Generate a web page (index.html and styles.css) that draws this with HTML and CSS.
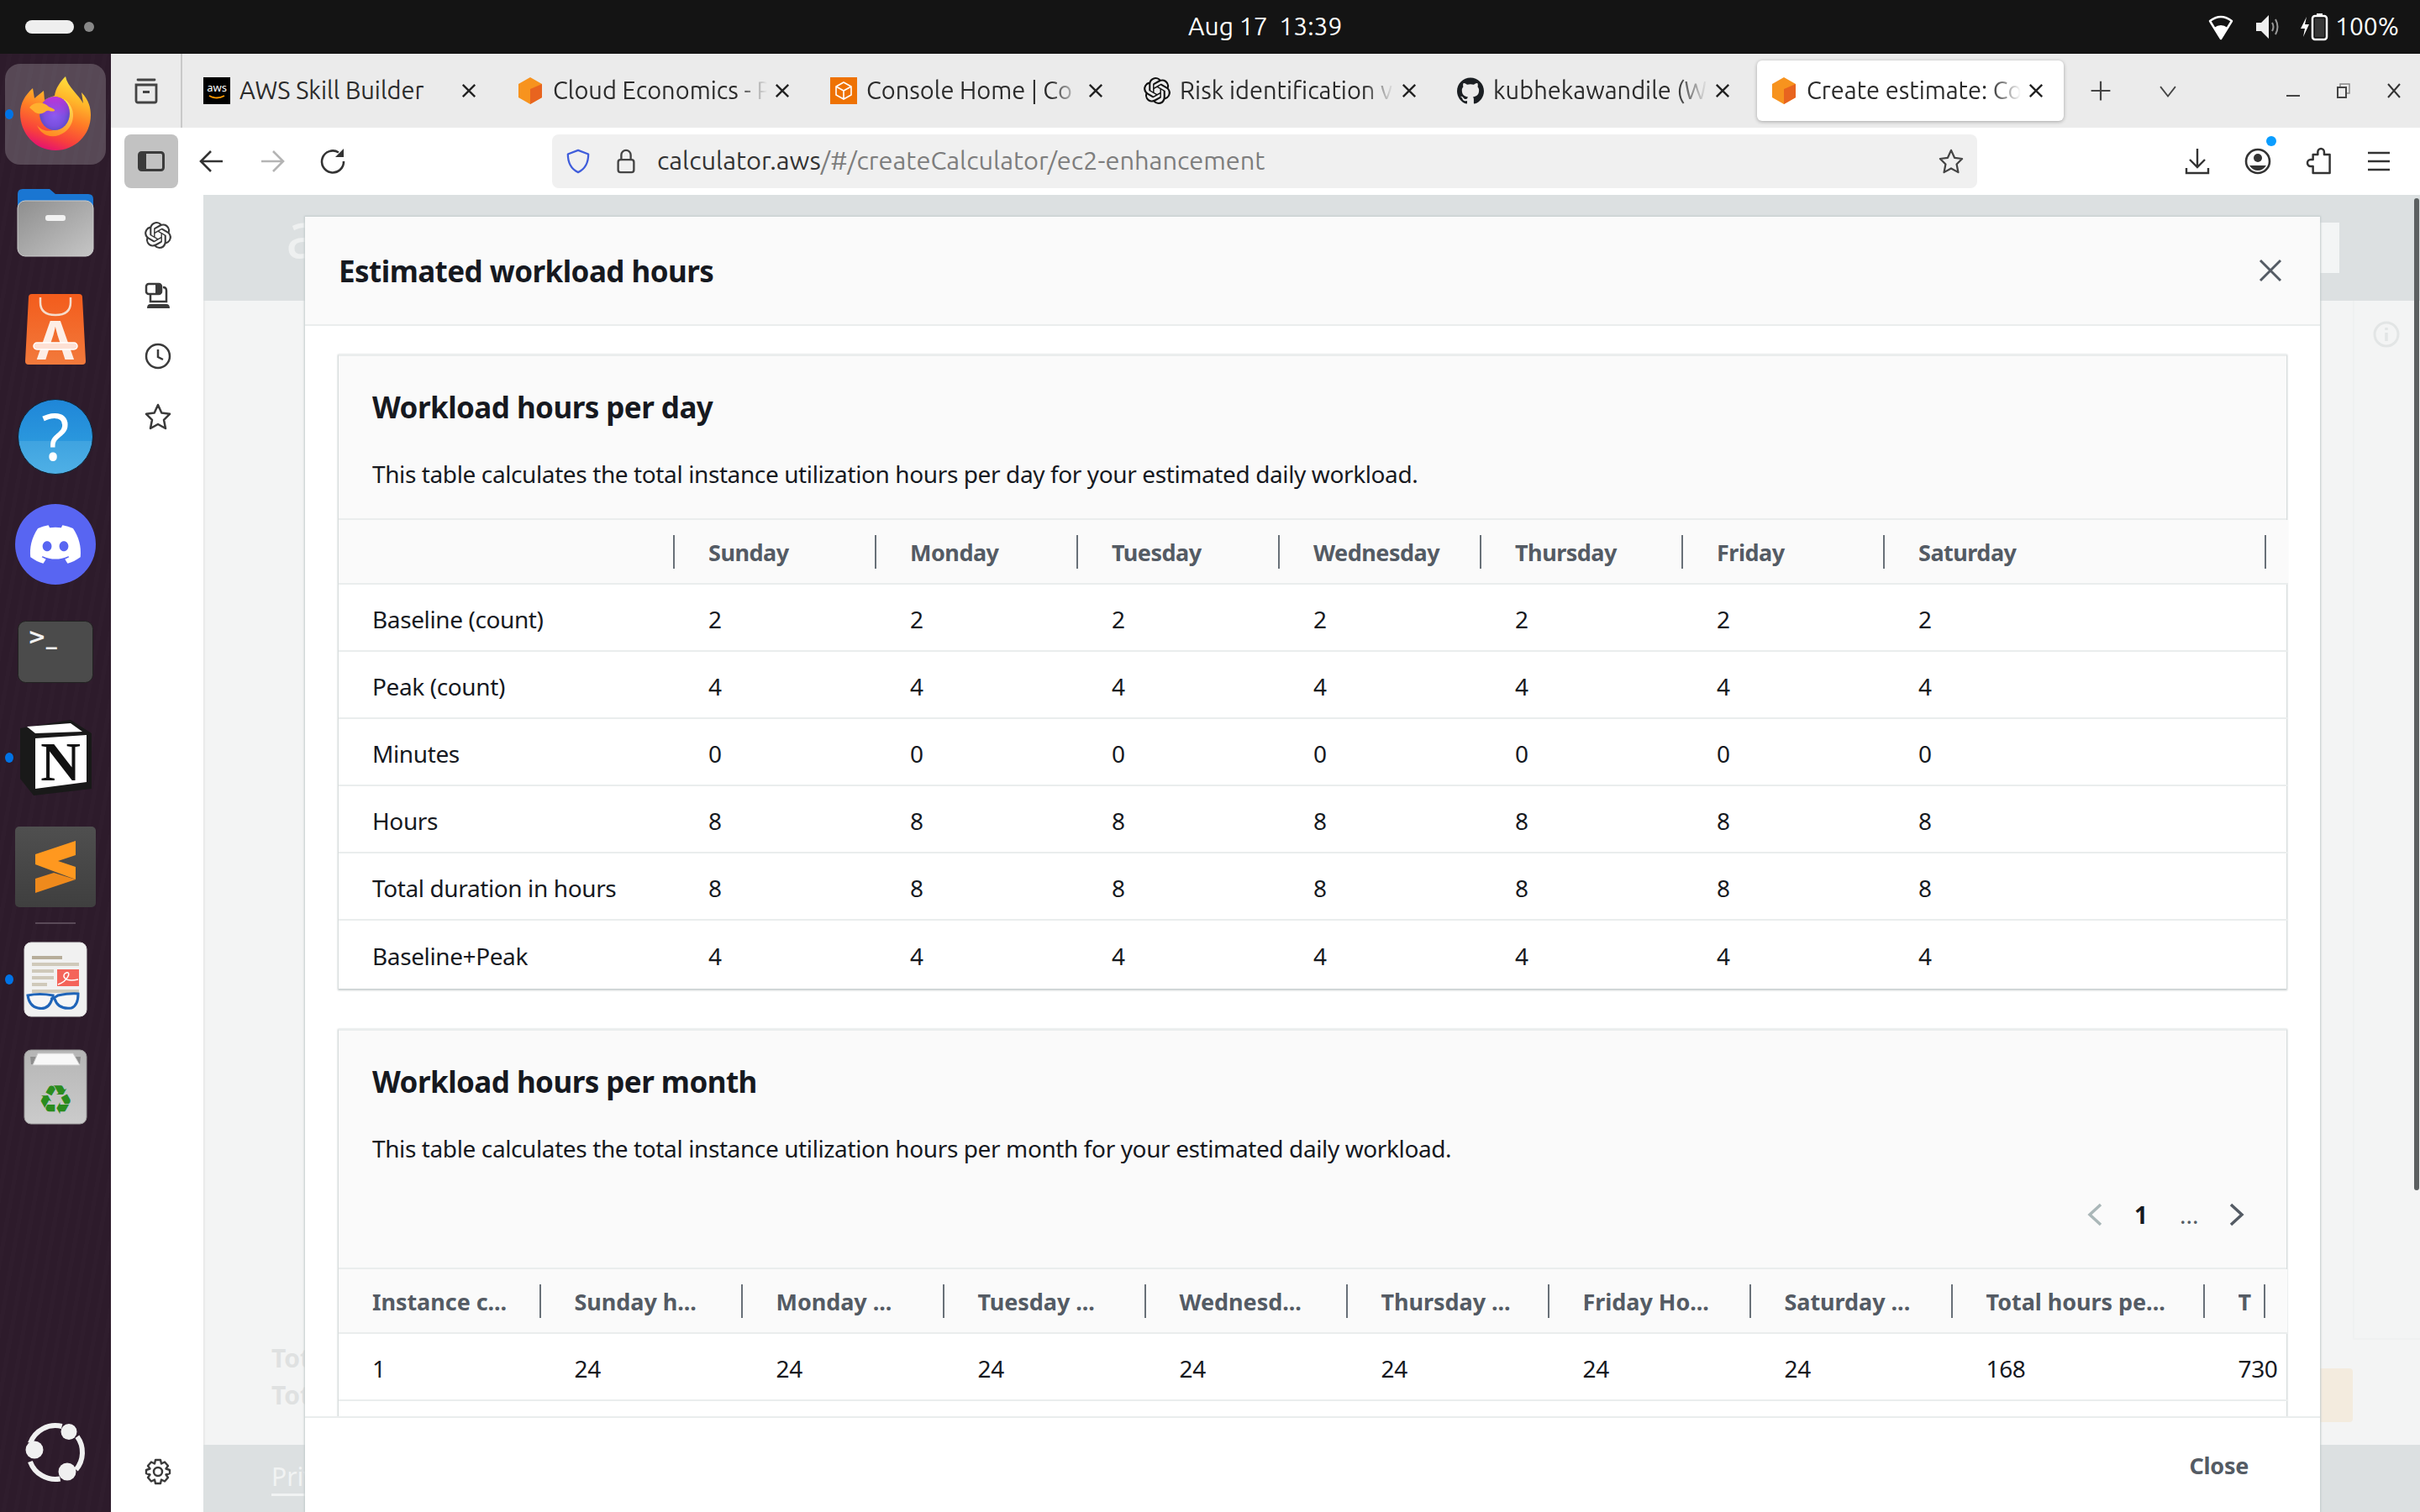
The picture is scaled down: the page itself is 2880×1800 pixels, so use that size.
FILE: index.html
```html
<!DOCTYPE html>
<html lang="en">
<head>
<meta charset="utf-8">
<title>Create estimate</title>
<link rel="stylesheet" href="styles.css">
</head>
<body>
<div class="desktop">
  <header class="topbar">
    <div class="workspaces"><span class="ws-pill"></span><span class="ws-dot"></span></div>
    <div class="clock">Aug 17&nbsp; 13:39</div>
    <div class="status">
      <svg class="st-wifi" viewBox="0 0 32 32"><path d="M16 30 3 9Q16-1 29 9Z" fill="none" stroke="#fff" stroke-width="2.5" stroke-linejoin="round"/><path d="M16 30 8 17Q16 11 24 17Z" fill="#fff"/></svg>
      <svg class="st-vol" viewBox="0 0 32 32"><path d="M2 11h6l9-9v28l-9-9H2Z" fill="#eee"/><path d="M21 11q3 5 0 10M25 7q5 9 0 18" fill="none" stroke="#999" stroke-width="2"/></svg>
      <svg class="st-bat" viewBox="0 0 34 32"><path d="M8 4 1 18h5l-2 10 7-15H6Z" fill="#fff"/><rect x="15" y="3" width="17" height="28" rx="3" fill="none" stroke="#fff" stroke-width="2.5"/><rect x="20" y="0" width="7" height="3" fill="#fff"/><rect x="18" y="6" width="11" height="22" fill="#fff" opacity=".15"/></svg>
      <span class="st-text">100%</span>
    </div>
  </header>

  <nav class="dock">
    <div class="dock-item dock-firefox">
      <span class="run-dot"></span>
      <svg class="ic-firefox" viewBox="0 0 84 88">
        <defs>
          <linearGradient id="ffa" x1=".75" y1="0" x2=".4" y2="1"><stop offset="0" stop-color="#ffe640"/><stop offset=".3" stop-color="#ffb52a"/><stop offset=".55" stop-color="#ff7a26"/><stop offset=".82" stop-color="#f8403c"/><stop offset="1" stop-color="#e5136f"/></linearGradient>
          <radialGradient id="ffb" cx=".5" cy=".55" r=".6"><stop offset="0" stop-color="#8a5cf0"/><stop offset=".55" stop-color="#7a4fe0"/><stop offset="1" stop-color="#4a48b0"/></radialGradient>
          <linearGradient id="ffp" x1=".5" y1="0" x2=".5" y2=".6"><stop offset="0" stop-color="#c235dc"/><stop offset="1" stop-color="#c235dc" stop-opacity="0"/></linearGradient>
          <linearGradient id="ffc" x1=".7" y1="0" x2=".4" y2="1"><stop offset="0" stop-color="#ffe45a"/><stop offset="1" stop-color="#ff8a22"/></linearGradient>
        </defs>
        <path d="M54 0C56 12 70 22 75 32L73 19C82 28 84 38 84 46 84 70 65 88 42 88 18 88 0 68 0 44 0 32 6 22 15 14L17 26 28 17 29 28C34 25 38 24 41 23 42 14 48 6 54 0Z" fill="url(#ffa)"/>
        <path d="M50 26C68 34 68 62 46 70 34 74 24 68 20 58 28 68 42 66 50 58 60 48 58 36 50 26Z" fill="url(#ffc)"/>
        <ellipse cx="41" cy="44" rx="18" ry="20" fill="url(#ffb)"/>
        <ellipse cx="41" cy="44" rx="18" ry="20" fill="url(#ffp)"/>
        <path d="M11 37C16 30 28 30 34 36 38 38 42 39 41 41 36 43 34 39 30 42 26 45 22 45 18 43Z" fill="#ffb02e"/>
      </svg>
    </div>
    <svg class="ic-folder" viewBox="0 0 90 82">
      <defs><linearGradient id="fo" x1="0" y1="0" x2="1" y2="1"><stop offset="0" stop-color="#8e8e8e"/><stop offset="1" stop-color="#c6c6c6"/></linearGradient></defs>
      <path d="M0 8q0-6 6-6h32l7 6h39q6 0 6 6v30H0Z" fill="#1a76d2"/>
      <rect x="0" y="16" width="90" height="66" rx="9" fill="url(#fo)" stroke="#ccc" stroke-width="1"/>
      <rect x="33" y="33" width="24" height="7" rx="3" fill="#f2f2f2"/>
    </svg>
    <svg class="ic-store" viewBox="0 0 72 84">
      <defs><linearGradient id="st" x1="0" y1="0" x2="0" y2="1"><stop offset="0" stop-color="#f35c1c"/><stop offset="1" stop-color="#f27a3c"/></linearGradient></defs>
      <path d="M4 4q0-4 4-4h56q4 0 4 4l4 76q0 4-4 4H4q-4 0-4-4Z" fill="url(#st)"/>
      <path d="M18 4v6q0 15 18 15t18-15V4" fill="none" stroke="#f5dccb" stroke-width="2.5"/>
      <text class="store-a" x="36" y="78" text-anchor="middle">A</text>
      <rect x="10" y="58" width="52" height="8" rx="4" fill="#fde0d4" stroke="#fff" stroke-width="1.5"/>
    </svg>
    <svg class="ic-help" viewBox="0 0 90 90">
      <defs><linearGradient id="he" x1="0" y1="0" x2="0" y2="1"><stop offset="0" stop-color="#1f86d8"/><stop offset=".55" stop-color="#2a97dd"/><stop offset=".56" stop-color="#3fa3e0"/><stop offset="1" stop-color="#4fb0e6"/></linearGradient></defs>
      <circle cx="45" cy="45" r="44.5" fill="url(#he)" stroke="#123" stroke-width="1"/>
      <text class="help-q" x="45" y="73" text-anchor="middle">?</text>
    </svg>
    <svg class="ic-discord" viewBox="0 0 96 96">
      <circle cx="48" cy="48" r="48" fill="#5865f2"/>
      <g transform="translate(18 18) scale(2.5)"><path fill="#fff" d="M20.317 4.3698a19.7913 19.7913 0 00-4.8851-1.5152.0741.0741 0 00-.0785.0371c-.211.3753-.4447.8648-.6083 1.2495-1.8447-.2762-3.68-.2762-5.4868 0-.1636-.3933-.4058-.8742-.6177-1.2495a.077.077 0 00-.0785-.037 19.7363 19.7363 0 00-4.8852 1.515.0699.0699 0 00-.0321.0277C.5334 9.0458-.319 13.5799.0992 18.0578a.0824.0824 0 00.0312.0561c2.0528 1.5076 4.0413 2.4228 5.9929 3.0294a.0777.0777 0 00.0842-.0276c.4616-.6304.8731-1.2952 1.226-1.9942a.076.076 0 00-.0416-.1057c-.6528-.2476-1.2743-.5495-1.8722-.8923a.077.077 0 01-.0076-.1277c.1258-.0943.2517-.1923.3718-.2914a.0743.0743 0 01.0776-.0105c3.9278 1.7933 8.18 1.7933 12.0614 0a.0739.0739 0 01.0785.0095c.1202.099.246.1981.3728.2924a.077.077 0 01-.0066.1276 12.2986 12.2986 0 01-1.873.8914.0766.0766 0 00-.0407.1067c.3604.698.7719 1.3628 1.225 1.9932a.076.076 0 00.0842.0286c1.961-.6067 3.9495-1.5219 6.0023-3.0294a.077.077 0 00.0313-.0552c.5004-5.177-.8382-9.6739-3.5485-13.6604a.061.061 0 00-.0312-.0286zM8.02 15.3312c-1.1825 0-2.1569-1.0857-2.1569-2.419 0-1.3332.9555-2.4189 2.157-2.4189 1.2108 0 2.1757 1.0952 2.1568 2.419 0 1.3332-.9555 2.4189-2.1569 2.4189zm7.9748 0c-1.1825 0-2.1569-1.0857-2.1569-2.419 0-1.3332.9554-2.4189 2.1569-2.4189 1.2108 0 2.1757 1.0952 2.1568 2.419 0 1.3332-.946 2.4189-2.1568 2.4189Z"/></g>
    </svg>
    <svg class="ic-term" viewBox="0 0 90 74">
      <rect x="0.5" y="0.5" width="89" height="73" rx="9" fill="#4b4b4b" stroke="#222"/>
      <text class="term-t" x="12" y="28">&gt;_</text>
    </svg>
    <div class="dock-item dock-notion">
      <span class="run-dot"></span>
      <svg class="ic-notion" viewBox="0 0 85 90">
        <path d="M0 10 60 0 85 16V82L16 90 0 70Z" fill="#191919"/>
        <path d="M8 8 60 4 74 14 18 16Z" fill="#fff"/>
        <path d="M18 22 79 18V74L18 82Z" fill="#fff"/>
        <text class="notion-n" x="48" y="72" text-anchor="middle">N</text>
      </svg>
    </div>
    <svg class="ic-sublime" viewBox="0 0 96 96">
      <defs><linearGradient id="su" x1="0" y1="0" x2="0" y2="1"><stop offset="0" stop-color="#4f4f4f"/><stop offset="1" stop-color="#3f3f3f"/></linearGradient></defs>
      <rect width="96" height="96" rx="5" fill="url(#su)"/>
      <path d="M24 33 72 17V34L51 41 72 48V63L24 45Z" fill="#ff981f"/>
      <path d="M24 62 46 55 72 63 24 79Z" fill="#ef8a1c"/>
    </svg>
    <span class="dock-sep"></span>
    <div class="dock-item dock-reader">
      <span class="run-dot"></span>
      <svg class="ic-reader" viewBox="0 0 74 88">
        <rect width="74" height="88" rx="8" fill="#f1f1f1" stroke="#ddd"/>
        <rect x="9" y="16" width="36" height="4" fill="#b6ad9a"/>
        <rect x="9" y="24" width="56" height="4" fill="#cfc9ba"/>
        <rect x="9" y="32" width="26" height="4" fill="#cfc9ba"/>
        <rect x="9" y="40" width="26" height="4" fill="#cfc9ba"/>
        <rect x="9" y="48" width="18" height="4" fill="#cfc9ba"/>
        <rect x="9" y="56" width="56" height="4" fill="#cfc9ba"/>
        <rect x="39" y="32" width="26" height="20" fill="#f4645a"/>
        <path d="M40 50C52 46 56 34 50 36 44 38 46 48 64 44" fill="none" stroke="#fff" stroke-width="1.5"/>
        <path d="M4 63q14-3 30 0-1 5 6 0 15-3 24-2 0 14-8 17-16 2-20-11-5-1-3 0-4 14-17 11Q6 76 4 63Z" fill="#fff" fill-opacity=".35" stroke="#1f64b8" stroke-width="3"/>
      </svg>
    </div>
    <svg class="ic-trash" viewBox="0 0 74 88">
      <defs><linearGradient id="tr" x1="0" y1="0" x2="0" y2="1"><stop offset="0" stop-color="#b5b5b5"/><stop offset="1" stop-color="#cbcbcb"/></linearGradient></defs>
      <rect width="74" height="88" rx="8" fill="url(#tr)" stroke="#9a9a9a"/>
      <path d="M7 8H67L66 17H8Z" fill="#8d8d8d"/>
      <path d="M10 18 16 4H58L66 18Z" fill="#f8f8f8" stroke="#ccc"/>
      <text class="trash-r" x="37" y="76" text-anchor="middle">♻</text>
    </svg>
    <svg class="ic-ubuntu" viewBox="0 0 72 68">
      <path d="M61.900 15.200A32 32 0 0 1 60.500 54.600M41.600 65.500A32 32 0 0 1 5.900 44.900M5.900 23.100A32 32 0 0 1 43.700 3" fill="none" stroke="#f0f0f0" stroke-width="6"/>
      <circle cx="52" cy="9.500" r="9.500" fill="#f0f0f0"/>
      <circle cx="11" cy="31" r="10.500" fill="#f0f0f0"/>
      <circle cx="50" cy="57" r="10.500" fill="#f0f0f0"/>
    </svg>
  </nav>

  <div class="browser">
    <div class="tabbar">
      <div class="view-btn">
        <svg class="icon" viewBox="0 0 32 32"><path d="M6 3h20M4 9h24v19a2 2 0 0 1-2 2H6a2 2 0 0 1-2-2Z" fill="none" stroke="#444" stroke-width="2.800" stroke-linecap="round"/><rect x="12" y="16" width="8" height="3" fill="#444"/></svg>
      </div>
      <div class="tab">
        <svg class="fav" viewBox="0 0 32 32"><rect width="32" height="32" fill="#000"/><text class="aws-t" x="16" y="17" text-anchor="middle">aws</text><path d="M7 22q9 5 18 0" fill="none" stroke="#f90" stroke-width="2"/></svg>
        <span class="tab-label plain">AWS Skill Builder</span>
        <span class="tab-x"><svg viewBox="0 0 20 20"><path d="M4 4 16 16M16 4 4 16" stroke="#222" stroke-width="2"/></svg></span>
      </div>
      <div class="tab">
        <svg class="fav" viewBox="0 0 32 32"><path d="M16 0 30 8V24L16 32 2 24V8Z" fill="#f7931e"/><path d="M16 14 30 8V24L16 32Z" fill="#e8641f"/></svg>
        <span class="tab-label">Cloud Economics - P</span>
        <span class="tab-x"><svg viewBox="0 0 20 20"><path d="M4 4 16 16M16 4 4 16" stroke="#222" stroke-width="2"/></svg></span>
      </div>
      <div class="tab">
        <svg class="fav" viewBox="0 0 32 32"><rect width="32" height="32" fill="#ee7203"/><path d="M16 6 25 11V21L16 26 7 21V11ZM7 11 16 16 25 11M16 16V26" fill="none" stroke="#fff" stroke-width="1.600"/></svg>
        <span class="tab-label">Console Home | Co</span>
        <span class="tab-x"><svg viewBox="0 0 20 20"><path d="M4 4 16 16M16 4 4 16" stroke="#222" stroke-width="2"/></svg></span>
      </div>
      <div class="tab">
        <svg class="fav" viewBox="0 0 24 24"><path fill="#111" d="M22.2819 9.8211a5.9847 5.9847 0 0 0-.5157-4.9108 6.0462 6.0462 0 0 0-6.5098-2.9A6.0651 6.0651 0 0 0 4.9807 4.1818a5.9847 5.9847 0 0 0-3.9977 2.9 6.0462 6.0462 0 0 0 .7427 7.0966 5.98 5.98 0 0 0 .511 4.9107 6.051 6.051 0 0 0 6.5146 2.9001A5.9847 5.9847 0 0 0 13.2599 24a6.0557 6.0557 0 0 0 5.7718-4.2058 5.9894 5.9894 0 0 0 3.9977-2.9001 6.0557 6.0557 0 0 0-.7475-7.0729zm-9.022 12.6081a4.4755 4.4755 0 0 1-2.8764-1.0408l.1419-.0804 4.7783-2.7582a.7948.7948 0 0 0 .3927-.6813v-6.7369l2.02 1.1686a.071.071 0 0 1 .038.052v5.5826a4.504 4.504 0 0 1-4.4945 4.4944zm-9.6607-4.1254a4.4708 4.4708 0 0 1-.5346-3.0137l.142.0852 4.783 2.7582a.7712.7712 0 0 0 .7806 0l5.8428-3.3685v2.3324a.0804.0804 0 0 1-.0332.0615L9.74 19.9502a4.4992 4.4992 0 0 1-6.1408-1.6464zM2.3408 7.8956a4.485 4.485 0 0 1 2.3655-1.9728V11.6a.7664.7664 0 0 0 .3879.6765l5.8144 3.3543-2.0201 1.1685a.0757.0757 0 0 1-.071 0l-4.8303-2.7865A4.504 4.504 0 0 1 2.3408 7.872zm16.5963 3.8558L13.1038 8.364 15.1192 7.2a.0757.0757 0 0 1 .071 0l4.8303 2.7913a4.4944 4.4944 0 0 1-.6765 8.1042v-5.6772a.79.79 0 0 0-.407-.667zm2.0107-3.0231l-.142-.0852-4.7735-2.7818a.7759.7759 0 0 0-.7854 0L9.409 9.2297V6.8974a.0662.0662 0 0 1 .0284-.0615l4.8303-2.7866a4.4992 4.4992 0 0 1 6.6802 4.66zM8.3065 12.863l-2.02-1.1638a.0804.0804 0 0 1-.038-.0567V6.0742a4.4992 4.4992 0 0 1 7.3757-3.4537l-.142.0805L8.704 5.459a.7948.7948 0 0 0-.3927.6813zm1.0976-2.3654l2.602-1.4998 2.6069 1.4998v2.9994l-2.5974 1.5093-2.6067-1.4997Z"/></svg>
        <span class="tab-label">Risk identification v</span>
        <span class="tab-x"><svg viewBox="0 0 20 20"><path d="M4 4 16 16M16 4 4 16" stroke="#222" stroke-width="2"/></svg></span>
      </div>
      <div class="tab">
        <svg class="fav" viewBox="0 0 24 24"><path fill="#1b1f23" d="M12 .297c-6.63 0-12 5.373-12 12 0 5.303 3.438 9.8 8.205 11.385.6.113.82-.258.82-.577 0-.285-.01-1.04-.015-2.04-3.338.724-4.042-1.61-4.042-1.61C4.422 18.07 3.633 17.7 3.633 17.7c-1.087-.744.084-.729.084-.729 1.205.084 1.838 1.236 1.838 1.236 1.07 1.835 2.809 1.305 3.495.998.108-.776.417-1.305.76-1.605-2.665-.3-5.466-1.332-5.466-5.93 0-1.31.465-2.38 1.235-3.22-.135-.303-.54-1.523.105-3.176 0 0 1.005-.322 3.3 1.23.96-.267 1.98-.399 3-.405 1.02.006 2.04.138 3 .405 2.28-1.552 3.27-1.23 3.27-1.23.645 1.653.24 2.873.12 3.176.765.84 1.23 1.91 1.23 3.22 0 4.61-2.805 5.625-5.475 5.92.42.36.81 1.096.81 2.22 0 1.606-.015 2.896-.015 3.286 0 .315.21.69.825.57C20.565 22.092 24 17.592 24 12.297c0-6.627-5.373-12-12-12"/></svg>
        <span class="tab-label">kubhekawandile (W</span>
        <span class="tab-x"><svg viewBox="0 0 20 20"><path d="M4 4 16 16M16 4 4 16" stroke="#222" stroke-width="2"/></svg></span>
      </div>
      <div class="tab tab-active">
        <svg class="fav" viewBox="0 0 32 32"><path d="M16 0 30 8V24L16 32 2 24V8Z" fill="#f7931e"/><path d="M16 14 30 8V24L16 32Z" fill="#e8641f"/></svg>
        <span class="tab-label">Create estimate: Co</span>
        <span class="tab-x"><svg viewBox="0 0 20 20"><path d="M4 4 16 16M16 4 4 16" stroke="#222" stroke-width="2"/></svg></span>
      </div>
      <button class="tb-btn tb-new"><svg viewBox="0 0 32 32"><path d="M16 3V29M3 16H29" stroke="#444" stroke-width="2.500"/></svg></button>
      <button class="tb-btn tb-list"><svg viewBox="0 0 32 32"><path d="M5 10 16 24 27 10" fill="none" stroke="#444" stroke-width="2.200"/></svg></button>
      <div class="win-ctl">
        <svg viewBox="0 0 20 20"><path d="M2 16H18" stroke="#444" stroke-width="2"/></svg>
        <svg viewBox="0 0 20 20"><path d="M6 5V2H17V13H14" fill="none" stroke="#888" stroke-width="1.500"/><rect x="3" y="6" width="10" height="12" fill="none" stroke="#444" stroke-width="2"/></svg>
        <svg viewBox="0 0 20 20"><path d="M3 2 17 18M17 2 3 18" stroke="#333" stroke-width="2"/></svg>
      </div>
    </div>

    <div class="toolbar">
      <button class="side-toggle"><svg viewBox="0 0 32 24"><rect x="1.500" y="1.500" width="29" height="21" rx="3" fill="none" stroke="#3b3b3b" stroke-width="3"/><rect x="2" y="2" width="8" height="20" fill="#3b3b3b"/></svg></button>
      <div class="nav-btns">
        <button class="nav-btn"><svg viewBox="0 0 32 32"><path d="M29 16H4M15 4 3 16 15 28" fill="none" stroke="#333" stroke-width="2.600"/></svg></button>
        <button class="nav-btn"><svg viewBox="0 0 32 32"><path d="M3 16H28M17 4 29 16 17 28" fill="none" stroke="#b4b4b4" stroke-width="2.600"/></svg></button>
        <button class="nav-btn"><svg viewBox="0 0 32 32"><path d="M23 5.500A13 13 0 1 0 29 16" fill="none" stroke="#333" stroke-width="2.600"/><path d="M19 11H29V1Z" fill="#333"/></svg></button>
      </div>
      <div class="urlbar">
        <svg class="url-shield" viewBox="0 0 32 32"><path d="M16 2 29 7Q29 24 16 30 3 24 3 7Z" fill="none" stroke="#3f5ddb" stroke-width="2.400" stroke-linejoin="round"/></svg>
        <svg class="url-lock" viewBox="0 0 32 32"><rect x="6" y="14" width="20" height="16" rx="3" fill="none" stroke="#444" stroke-width="2.500"/><path d="M10 14V8a6 6 0 0 1 12 0V14" fill="none" stroke="#444" stroke-width="2.500"/></svg>
        <span class="url-text">calculator.aws<span class="url-path">/#/createCalculator/ec2-enhancement</span></span>
        <svg class="url-star" viewBox="0 0 32 32"><path d="M16 2 20.300 11.500 30 12.800 23 19.800 25 30 16 25 7 30 9 19.800 2 12.800 11.700 11.500Z" fill="none" stroke="#444" stroke-width="2.400" stroke-linejoin="round"/></svg>
      </div>
      <div class="tool-btns">
        <button class="nav-btn"><svg viewBox="0 0 32 32"><path d="M16 1V23M7 14 16 23 25 14" fill="none" stroke="#333" stroke-width="2.400"/><path d="M3 24V30H29V24" fill="none" stroke="#333" stroke-width="2.400"/></svg></button>
        <button class="nav-btn account"><svg viewBox="0 0 32 32"><circle cx="16" cy="16" r="14" fill="none" stroke="#333" stroke-width="2.600"/><circle cx="16" cy="12" r="5" fill="#333"/><path d="M6 21H26Q22 27 16 27 10 27 6 21Z" fill="#333"/></svg><span class="acct-dot"></span></button>
        <button class="nav-btn"><svg viewBox="0 0 32 32"><path d="M13 8V5a4 4 0 0 1 8 0V8H28V30H7V22H4a4 4 0 0 1 0-8H7V8Z" transform="translate(3 0) scale(.95 1)" fill="none" stroke="#333" stroke-width="2.600" stroke-linejoin="round"/></svg></button>
        <button class="nav-btn"><svg viewBox="0 0 32 32"><path d="M3 6H29M3 16H29M3 26H29" stroke="#333" stroke-width="2.600"/></svg></button>
      </div>
    </div>

    <div class="workspace">
      <aside class="sidebar">
        <svg class="icon" viewBox="0 0 24 24"><path fill="#3a3a3a" d="M22.2819 9.8211a5.9847 5.9847 0 0 0-.5157-4.9108 6.0462 6.0462 0 0 0-6.5098-2.9A6.0651 6.0651 0 0 0 4.9807 4.1818a5.9847 5.9847 0 0 0-3.9977 2.9 6.0462 6.0462 0 0 0 .7427 7.0966 5.98 5.98 0 0 0 .511 4.9107 6.051 6.051 0 0 0 6.5146 2.9001A5.9847 5.9847 0 0 0 13.2599 24a6.0557 6.0557 0 0 0 5.7718-4.2058 5.9894 5.9894 0 0 0 3.9977-2.9001 6.0557 6.0557 0 0 0-.7475-7.0729zm-9.022 12.6081a4.4755 4.4755 0 0 1-2.8764-1.0408l.1419-.0804 4.7783-2.7582a.7948.7948 0 0 0 .3927-.6813v-6.7369l2.02 1.1686a.071.071 0 0 1 .038.052v5.5826a4.504 4.504 0 0 1-4.4945 4.4944zm-9.6607-4.1254a4.4708 4.4708 0 0 1-.5346-3.0137l.142.0852 4.783 2.7582a.7712.7712 0 0 0 .7806 0l5.8428-3.3685v2.3324a.0804.0804 0 0 1-.0332.0615L9.74 19.9502a4.4992 4.4992 0 0 1-6.1408-1.6464zM2.3408 7.8956a4.485 4.485 0 0 1 2.3655-1.9728V11.6a.7664.7664 0 0 0 .3879.6765l5.8144 3.3543-2.0201 1.1685a.0757.0757 0 0 1-.071 0l-4.8303-2.7865A4.504 4.504 0 0 1 2.3408 7.872zm16.5963 3.8558L13.1038 8.364 15.1192 7.2a.0757.0757 0 0 1 .071 0l4.8303 2.7913a4.4944 4.4944 0 0 1-.6765 8.1042v-5.6772a.79.79 0 0 0-.407-.667zm2.0107-3.0231l-.142-.0852-4.7735-2.7818a.7759.7759 0 0 0-.7854 0L9.409 9.2297V6.8974a.0662.0662 0 0 1 .0284-.0615l4.8303-2.7866a4.4992 4.4992 0 0 1 6.6802 4.66zM8.3065 12.863l-2.02-1.1638a.0804.0804 0 0 1-.038-.0567V6.0742a4.4992 4.4992 0 0 1 7.3757-3.4537l-.142.0805L8.704 5.459a.7948.7948 0 0 0-.3927.6813zm1.0976-2.3654l2.602-1.4998 2.6069 1.4998v2.9994l-2.5974 1.5093-2.6067-1.4997Z"/></svg>
        <svg class="icon" viewBox="0 0 32 32"><rect x="2" y="2" width="18" height="12" rx="3" fill="none" stroke="#3a3a3a" stroke-width="2.500"/><rect x="13" y="3" width="6" height="10" fill="#3a3a3a"/><path d="M7 15V23H26V10Q26 6 22 6" fill="none" stroke="#3a3a3a" stroke-width="2.500"/><path d="M3 31q0-5 4-5H26q4 0 4 5Z" fill="#3a3a3a"/></svg>
        <svg class="icon" viewBox="0 0 32 32"><circle cx="16" cy="16" r="14" fill="none" stroke="#3a3a3a" stroke-width="2.500"/><path d="M16 8V17L22 20" fill="none" stroke="#3a3a3a" stroke-width="2.500"/></svg>
        <svg class="icon" viewBox="0 0 32 32"><path d="M16 2 20.300 11.500 30 12.800 23 19.800 25 30 16 25 7 30 9 19.800 2 12.800 11.700 11.500Z" fill="none" stroke="#3a3a3a" stroke-width="2.500" stroke-linejoin="round"/></svg>
        <svg class="icon gear" viewBox="0 0 32 32"><circle cx="16" cy="16" r="5" fill="none" stroke="#3a3a3a" stroke-width="2.500"/><path d="M13 2H19L20 6.500 24 4.500 28 9 25.500 12.500 30 14V18L25.500 19.500 28 23 24 27.500 20 25.500 19 30H13L12 25.500 8 27.500 4 23 6.500 19.500 2 18V14L6.500 12.500 4 9 8 4.500 12 6.500Z" fill="none" stroke="#3a3a3a" stroke-width="2.400" stroke-linejoin="round"/></svg>
      </aside>

      <main class="page">
        <div class="page-head"><span class="page-logo">a</span><span class="page-search"></span></div>
        <div class="page-body">
          <svg class="page-info" viewBox="0 0 32 32"><circle cx="16" cy="16" r="14" fill="none" stroke="#e2e5e5" stroke-width="3"/><path d="M16 14V24M16 8V11" stroke="#e2e5e5" stroke-width="3.500"/></svg>
          <span class="page-panel"></span>
          <span class="page-alert"></span>
          <div class="page-total">Total</div>
          <div class="page-total">Total</div>
        </div>
        <div class="page-foot"><a class="page-link">Privacy</a></div>

        <section class="modal">
          <div class="modal-head">
            <h2 class="modal-title">Estimated workload hours</h2>
            <svg class="modal-x" viewBox="0 0 28 28"><path d="M2 2 26 26M26 2 2 26" stroke="#545b64" stroke-width="3"/></svg>
          </div>
          <div class="modal-body">
            <article class="card">
              <div class="card-head">
                <h3 class="card-title">Workload hours per day</h3>
                <p class="card-desc">This table calculates the total instance utilization hours per day for your estimated daily workload.</p>
              </div>
              <table class="grid">
                <colgroup><col class="c-lead"><col class="c-d"><col class="c-d"><col class="c-d"><col class="c-d"><col class="c-d"><col class="c-d"><col class="c-rest"><col class="c-trail"></colgroup>
                <thead><tr><th></th><th>Sunday</th><th>Monday</th><th>Tuesday</th><th>Wednesday</th><th>Thursday</th><th>Friday</th><th>Saturday</th><th class="no-sep"></th></tr></thead>
                <tbody>
                  <tr><td>Baseline (count)</td><td>2</td><td>2</td><td>2</td><td>2</td><td>2</td><td>2</td><td>2</td><td></td></tr>
                  <tr><td>Peak (count)</td><td>4</td><td>4</td><td>4</td><td>4</td><td>4</td><td>4</td><td>4</td><td></td></tr>
                  <tr><td>Minutes</td><td>0</td><td>0</td><td>0</td><td>0</td><td>0</td><td>0</td><td>0</td><td></td></tr>
                  <tr><td>Hours</td><td>8</td><td>8</td><td>8</td><td>8</td><td>8</td><td>8</td><td>8</td><td></td></tr>
                  <tr><td>Total duration in hours</td><td>8</td><td>8</td><td>8</td><td>8</td><td>8</td><td>8</td><td>8</td><td></td></tr>
                  <tr class="last"><td>Baseline+Peak</td><td>4</td><td>4</td><td>4</td><td>4</td><td>4</td><td>4</td><td>4</td><td></td></tr>
                </tbody>
              </table>
            </article>
            <article class="card card-month">
              <div class="card-head card-head-month">
                <h3 class="card-title">Workload hours per month</h3>
                <p class="card-desc">This table calculates the total instance utilization hours per month for your estimated daily workload.</p>
                <div class="pager">
                  <svg class="pg-arrow" viewBox="0 0 18 28"><path d="M16 2 3 14 16 26" fill="none" stroke="#aab7b8" stroke-width="3.500"/></svg>
                  <span class="pg-num">1</span>
                  <span class="pg-more">...</span>
                  <svg class="pg-arrow" viewBox="0 0 18 28"><path d="M2 2 15 14 2 26" fill="none" stroke="#545b64" stroke-width="3.500"/></svg>
                </div>
              </div>
              <table class="grid grid-month">
                <colgroup><col class="m-lead"><col class="m-d"><col class="m-d"><col class="m-d"><col class="m-d"><col class="m-d"><col class="m-d"><col class="m-d"><col class="m-total"><col class="m-last"><col class="c-trail"></colgroup>
                <thead><tr><th>Instance c...</th><th>Sunday h...</th><th>Monday ...</th><th>Tuesday ...</th><th>Wednesd...</th><th>Thursday ...</th><th>Friday Ho...</th><th>Saturday ...</th><th>Total hours pe...</th><th class="clip"><span>T</span></th><th class="no-sep"></th></tr></thead>
                <tbody>
                  <tr><td>1</td><td>24</td><td>24</td><td>24</td><td>24</td><td>24</td><td>24</td><td>24</td><td>168</td><td>730</td><td></td></tr>
                  <tr><td></td><td></td><td></td><td></td><td></td><td></td><td></td><td></td><td></td><td></td><td></td></tr>
                </tbody>
              </table>
            </article>
          </div>
          <div class="modal-foot"><button class="close-btn">Close</button></div>
        </section>
        <span class="page-scroll"></span>
      </main>
    </div>
  </div>
</div>
</body>
</html>
```
FILE: styles.css
```css
* { box-sizing: border-box; }
html, body { margin: 0; padding: 0; }
body { width: 2880px; height: 1800px; overflow: hidden; font-family: "Noto Sans", sans-serif; background: #fff; }
button { border: 0; padding: 0; background: none; font: inherit; }
svg { display: block; flex: none; overflow: visible; }

.desktop { display: grid; grid-template-columns: 132px 1fr; grid-template-rows: 64px 1fr; width: 2880px; height: 1800px; }

/* top bar */
.topbar { grid-column: 1 / -1; background: #141414; color: #fff; display: grid; grid-template-columns: 1414px 1fr auto; align-items: center; font-family: "Ubuntu", "Noto Sans", sans-serif; padding-right: 25px; }
.workspaces { display: flex; align-items: center; gap: 12px; padding-left: 30px; }
.ws-pill { width: 58px; height: 16px; border-radius: 8px; background: #eeeeee; }
.ws-dot { width: 12px; height: 12px; border-radius: 50%; background: #888; }
.clock { font-size: 30px; padding-bottom: 3px; }
.status { display: flex; align-items: center; }
.st-wifi { width: 32px; height: 32px; }
.st-vol { width: 32px; height: 32px; margin-left: 24px; }
.st-bat { width: 34px; height: 32px; margin-left: 22px; }
.st-text { margin-left: 8px; font-size: 30px; padding-bottom: 3px; }

/* dock */
.dock { background: repeating-linear-gradient(100deg, #2d1b2b 0 9px, #2f1d2d 9px 14px); display: flex; flex-direction: column; align-items: center; position: relative; }
.dock-item { position: relative; display: flex; justify-content: center; align-items: center; }
.run-dot { position: absolute; left: 6px; top: 50%; width: 10px; height: 12px; margin-top: -6px; border-radius: 50%; background: #0073e6; }
.dock-firefox { width: 120px; height: 120px; margin-top: 12px; border-radius: 18px; background: rgba(255,255,255,.2); }
.dock-firefox .run-dot { left: 0; }
.ic-firefox { width: 84px; height: 88px; margin-top: -3px; }
.ic-folder { width: 90px; height: 82px; margin-top: 27px; }
.ic-store { width: 72px; height: 84px; margin-top: 45px; }
.ic-help { width: 90px; height: 90px; margin-top: 41px; }
.ic-discord { width: 96px; height: 96px; margin-top: 35px; }
.ic-term { width: 90px; height: 74px; margin-top: 43px; }
.dock-notion { width: 132px; margin-top: 44px; }
.dock-notion .run-dot { left: 6px; }
.ic-notion { width: 85px; height: 90px; }
.ic-sublime { width: 96px; height: 96px; margin-top: 37px; }
.dock-sep { width: 48px; height: 2px; background: #5a4a58; margin-top: 18px; }
.dock-reader { width: 132px; margin-top: 22px; }
.ic-reader { width: 74px; height: 88px; }
.ic-trash { width: 74px; height: 88px; margin-top: 40px; }
.ic-ubuntu { width: 72px; height: 68px; margin-top: auto; margin-bottom: 37px; }
.store-a { font: 700 64px "Noto Sans", sans-serif; fill: #fdeee6; }
.help-q { font: 400 76px "Noto Sans", sans-serif; fill: #fff; }
.term-t { font: 700 26px "DejaVu Sans", sans-serif; fill: #f2f2f2; }
.notion-n { font: 700 66px "Liberation Serif", serif; fill: #111; }
.trash-r { font: 400 48px "DejaVu Sans", sans-serif; fill: #2a8c1e; }
.aws-t { font: 400 13px "Noto Sans", sans-serif; fill: #fff; }

/* browser chrome */
.browser { display: flex; flex-direction: column; min-width: 0; }
.tabbar { height: 88px; background: #ebebeb; display: flex; align-items: center; font-family: "Ubuntu", "Noto Sans", sans-serif; }
.icon { width: 32px; height: 32px; }
.view-btn { width: 85px; height: 88px; border-right: 2px solid #c9c9c9; display: flex; align-items: center; justify-content: center; margin-right: 9px; }
.tab { width: 365px; height: 72px; margin-right: 8px; padding: 0 21px 0 16px; display: flex; align-items: center; border-radius: 6px; color: #2b2b2b; font-size: 29px; flex: none; }
.tab-active { background: #fff; box-shadow: 0 1px 4px rgba(0,0,0,.3); }
.fav { width: 32px; height: 32px; }
.tab-label { flex: 1; min-width: 0; margin-left: 11px; padding-bottom: 3px; white-space: nowrap; overflow: hidden; -webkit-mask-image: linear-gradient(90deg, #000 calc(100% - 36px), transparent); mask-image: linear-gradient(90deg, #000 calc(100% - 36px), transparent); }
.tab-label.plain { -webkit-mask-image: none; mask-image: none; }
.tab-x { width: 24px; height: 24px; margin-left: 6px; display: flex; align-items: center; justify-content: center; }
.tab-x svg { width: 24px; height: 24px; }
.tb-btn { width: 36px; height: 36px; flex: none; }
.tb-new { margin-left: 22px; width: 28px; }
.tb-new svg { width: 28px; height: 28px; }
.tb-list { margin-left: 53px; width: 26px; }
.tb-list svg { width: 26px; height: 26px; }
.win-ctl { display: flex; gap: 40px; margin-left: 126px; }
.win-ctl svg { width: 20px; height: 20px; }

.toolbar { height: 80px; background: #fff; display: flex; align-items: center; padding-left: 16px; }
.side-toggle { width: 64px; height: 64px; border-radius: 8px; background: #c2c2c2; display: flex; align-items: center; justify-content: center; }
.side-toggle svg { width: 32px; height: 24px; }
.nav-btns { display: flex; margin-left: 4px; }
.tool-btns { display: flex; margin-left: 226px; }
.nav-btn { width: 72px; height: 64px; display: flex; align-items: center; justify-content: center; position: relative; }
.nav-btn svg { width: 32px; height: 32px; }
.account .acct-dot { position: absolute; left: 46px; top: 2px; width: 12px; height: 12px; border-radius: 50%; background: #0a9dff; }
.urlbar { width: 1696px; height: 64px; margin-left: 225px; background: #f0f0f0; border-radius: 8px; display: flex; align-items: center; padding: 0 16px 0 16px; font-family: "Ubuntu", "Noto Sans", sans-serif; font-size: 30.8px; color: #333; }
.urlbar svg { width: 30px; height: 32px; }
.url-lock { margin-left: 27px; }
.url-text { margin-left: 22px; padding-bottom: 3px; flex: 1; white-space: nowrap; }
.url-path { color: #7d7d7d; }

/* sidebar + page */
.workspace { flex: 1; display: flex; min-height: 0; }
.sidebar { width: 110px; background: #fff; display: flex; flex-direction: column; align-items: center; gap: 40px; padding: 32px 0 32px 2px; }
.gear { margin-top: auto; }
.page { flex: 1; position: relative; display: flex; flex-direction: column; overflow: hidden; background: #f3f4f4; box-shadow: inset 3px 0 3px -2px rgba(0,0,0,.08); }
.page-head { height: 126px; background: #dce0e1; flex: none; position: relative; overflow: hidden; }
.page-logo { position: absolute; left: 98px; top: 8px; font-size: 76px; font-weight: 400; line-height: 1; color: #eef0f0; }
.page-search { position: absolute; right: 96px; top: 33px; width: 40px; height: 60px; background: #f3f5f5; }
.page-body { flex: 1; padding-left: 81px; display: flex; flex-direction: column; justify-content: flex-end; padding-bottom: 37px; position: relative; }
.page-total { font-size: 30px; font-weight: 700; line-height: 44px; color: #dfe1e1; }
.page-foot { height: 80px; flex: none; background: #dce0e1; padding: 18px 0 0 81px; }
.page-link { color: #f1f3f3; font-size: 30px; line-height: 40px; display: inline-block; border-bottom: 3px solid #f1f3f3; }
.page-info { position: absolute; left: 2582px; top: 24px; width: 32px; height: 32px; }
.page-panel { position: absolute; left: 2558px; top: 0; right: 0; height: 1237px; border-left: 2px solid #eff1f1; border-bottom: 2px solid #eff1f1; }
.page-alert { position: absolute; left: 2500px; top: 1271px; width: 58px; height: 64px; border-radius: 4px; background: #f3ebde; }
.page-scroll { position: absolute; right: 1px; top: 4px; width: 6px; height: 1181px; border-radius: 3px; background: #5b5f60; }

/* modal */
.modal { position: absolute; left: 121px; top: 26px; width: 2398px; height: 1542px; background: #fff; display: flex; flex-direction: column; box-shadow: 0 0 2px 1px #c2cacb; font-family: "Noto Sans", sans-serif; }
.modal-head { height: 130px; flex: none; background: #fafafa; border-bottom: 2px solid #eaeded; display: flex; align-items: center; justify-content: space-between; padding: 0 45px 0 40px; }
.modal-title { margin: 0; font-size: 35px; letter-spacing: -.55px; font-weight: 700; color: #16191f; }
.modal-x { width: 28px; height: 28px; }
.modal-body { flex: 1; min-height: 0; overflow: hidden; padding: 34px 40px 0 40px; }
.modal-foot { height: 114px; flex: none; border-top: 2px solid #eaeded; display: flex; justify-content: flex-end; align-items: center; padding-right: 85px; }
.close-btn { font-size: 27px; letter-spacing: -.3px; font-weight: 700; color: #545b64; }

.card { background: #fff; border-top: 2px solid #eaeded; box-shadow: 0 1px 2px 1px #c6cdce; margin-bottom: 48px; }
.card-head { height: 195px; background: #fafafa; padding: 38px 40px 0; border-bottom: 2px solid #eaeded; }
.card-head-month { height: 284px; position: relative; }
.card-title { margin: 0; font-size: 35px; letter-spacing: -.55px; font-weight: 700; line-height: 46px; color: #16191f; }
.card-desc { margin: 34px 0 0; font-size: 28px; letter-spacing: -.39px; line-height: 44px; color: #16191f; }
.pager { position: absolute; right: 50px; top: 200px; display: flex; align-items: center; font-size: 28px; }
.pg-arrow { width: 18px; height: 28px; }
.pg-num { margin-left: 38px; font-weight: 700; color: #16191f; width: 16px; }
.pg-more { margin-left: 38px; color: #545b64; width: 20px; }
.pg-more + .pg-arrow { margin-left: 39px; }

.grid { width: 100%; border-collapse: collapse; table-layout: fixed; font-size: 28px; letter-spacing: -.39px; color: #16191f; }
.c-lead { width: 400px; }
.c-d { width: 240px; }
.c-rest { width: 453.8px; }
.c-trail { width: 26px; }
.m-lead { width: 240.5px; }
.m-d { width: 240px; }
.m-total { width: 300px; }
.m-last { width: 72px; }
.grid th { height: 76px; background: #fafafa; border-bottom: 2px solid #eaeded; padding: 2px 0 0 40px; text-align: left; font-size: 27px; letter-spacing: -.5px; font-weight: 700; color: #545b64; position: relative; white-space: nowrap; }
.grid-month th { letter-spacing: -.05px; }
.grid th::after { content: ""; position: absolute; right: 0; top: 18px; height: 40px; width: 2px; background: #687078; }
.grid th.no-sep::after { display: none; }
.grid th.clip { padding-right: 15px; }
.grid th.clip span { display: block; overflow: hidden; }
.grid td { height: 80px; border-bottom: 2px solid #eaeded; padding: 3px 0 0 40px; white-space: nowrap; }
.grid tr.last td { border-bottom: 0; height: 82px; }
```
